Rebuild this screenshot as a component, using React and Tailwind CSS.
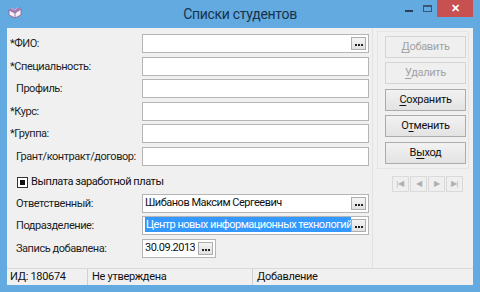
import React from 'react';

const font = { fontFamily: 'Roboto, "Noto Sans", sans-serif' };

function Mn({ pre = '', u, post = '' }) {
  return (
    <span>
      {pre}
      <span className="underline underline-offset-2">{u}</span>
      {post}
    </span>
  );
}

function DotsButton() {
  return (
    <div className="shrink-0 w-[15px] h-[13px] mr-[2px] border border-[#adadad] bg-gradient-to-b from-[#f4f4f4] to-[#e1e1e1] flex items-center justify-center gap-[1px] pt-[2px]">
      <div className="w-[2px] h-[2px] bg-[#222]" />
      <div className="w-[2px] h-[2px] bg-[#222]" />
      <div className="w-[2px] h-[2px] bg-[#222]" />
    </div>
  );
}

function Field({ label, indent, mt, dots, children, w = 'w-[227px]', selected }) {
  return (
    <div className={`flex items-center h-[19px] ${mt}`}>
      <div className={`w-[135px] pt-[1px] ${indent ? 'pl-[9px]' : 'pl-[3px]'} text-[11px] tracking-[-0.45px] text-[#1e1e1e] whitespace-nowrap`}>
        {label}
      </div>
      <div
        className={`${w} h-[19px] bg-white border border-[#b5b5b5] flex items-center justify-between`}
      >
        <div className="pl-[2px] text-[11px] tracking-[-0.5px] text-[#111] whitespace-nowrap overflow-hidden">
          {selected ? (
            <span className="bg-[#3399ff] text-white px-[1px] py-[1px]">{children}</span>
          ) : (
            children
          )}
        </div>
        {dots && <DotsButton />}
      </div>
    </div>
  );
}

function Btn({ children, disabled, mt }) {
  return (
    <div
      className={`${mt} w-[81px] h-[22px] flex items-center justify-center text-[11px] tracking-[-0.3px] border ${
        disabled
          ? 'border-[#d5d5d5] bg-[#efefef] text-[#a3a3a3]'
          : 'border-[#acacac] bg-gradient-to-b from-[#f2f2f2] to-[#e3e3e3] text-[#111]'
      }`}
    >
      {children}
    </div>
  );
}

function NavBtn({ children }) {
  return (
    <div className="w-[17px] h-[16px] border border-[#dadada] bg-[#efefef] flex items-center justify-center text-[8px] text-[#b0b0b0] leading-none">
      {children}
    </div>
  );
}

function BookIcon() {
  return (
    <svg width="14" height="13" viewBox="0 0 14 13">
      <path d="M1 4 L7 7 L13 3 L13 9 L7 12 L1 9 Z" fill="#f6eef6" stroke="#8a5a8a" strokeWidth="0.8" />
      <path d="M7 7 L7 12" stroke="#8a5a8a" strokeWidth="0.8" />
      <path d="M2 3 L7 5.5 L12 1.5" fill="none" stroke="#c56aa8" strokeWidth="1.2" />
      <path d="M3 2 L7 4 L10 1" fill="none" stroke="#e0a0c8" strokeWidth="1" />
    </svg>
  );
}

export default function App() {
  return (
    <div className="w-[480px] h-[292px] bg-[#62aadf] flex flex-col overflow-hidden" style={font}>
      {/* title bar */}
      <div className="h-[28px] flex items-start relative">
        <div className="pl-[8px] pt-[6px]">
          <BookIcon />
        </div>
        <div className="absolute left-0 right-0 top-[4px] text-center text-[14px] tracking-[-0.3px] text-[#18324d]">
          Списки студентов
        </div>
        <div className="ml-auto flex items-start">
          <div className="w-[20px] h-[17px] flex items-center justify-center">
            <div className="w-[8px] h-[2px] bg-[#2a3f55] mt-[4px]" />
          </div>
          <div className="w-[16px] h-[17px] flex items-center justify-center">
            <div className="w-[9px] h-[7px] border border-[#3c5670] border-t-2" />
          </div>
          <div className="ml-[2px] mr-[7px] w-[36px] h-[17px] bg-[#c75050] flex items-center justify-center text-white text-[11px] font-bold leading-none">
            ✕
          </div>
        </div>
      </div>

      {/* client */}
      <div className="mx-[7px] flex-1 bg-[#f0f0f0] flex flex-col">
        <div className="flex flex-1">
          {/* form */}
          <div className="w-[366px] border-r border-[#e2e2e2] flex flex-col">
            <Field label="*ФИО:" mt="mt-[6px]" dots />
            <Field label="*Специальность:" mt="mt-[4px]" />
            <Field label="Профиль:" indent mt="mt-[3px]" />
            <Field label="*Курс:" mt="mt-[4px]" />
            <Field label="*Группа:" mt="mt-[3px]" />
            <Field label="Грант/контракт/договор:" indent mt="mt-[4px]" />
            <div className="flex items-center h-[18px] mt-[7px] pl-[10px]">
              <div className="w-[11px] h-[11px] border border-[#333] bg-white flex items-center justify-center">
                <div className="w-[5px] h-[5px] bg-[#111]" />
              </div>
              <span className="ml-[3px] text-[11px] tracking-[-0.45px] text-[#111]">Выплата заработной платы</span>
            </div>
            <Field label="Ответственный:" indent mt="mt-[3px]" dots>
              Шибанов Максим Сергеевич
            </Field>
            <Field label="Подразделение:" indent mt="mt-[3px]" dots selected>
              Центр новых информационных технологий
            </Field>
            <Field label="Запись добавлена:" indent mt="mt-[4px]" dots w="w-[74px]">
              30.09.2013
            </Field>
          </div>
          {/* buttons */}
          <div className="flex-1 flex flex-col pl-[4px] pt-[3px]">
            <div className="w-[92px] h-[138px] border border-[#e4e4e4] flex flex-col items-start pl-[7px]">
              <Btn disabled mt="mt-[4px]"><Mn u="Д" post="обавить" /></Btn>
              <Btn disabled mt="mt-[4px]"><Mn u="У" post="далить" /></Btn>
              <Btn mt="mt-[5px]"><Mn u="С" post="охранить" /></Btn>
              <Btn mt="mt-[4px]"><Mn pre="О" u="т" post="менить" /></Btn>
              <Btn mt="mt-[5px]"><Mn pre="В" u="ы" post="ход" /></Btn>
            </div>
            <div className="flex ml-[15px] mt-[7px] gap-[1px]">
              <NavBtn>|◀</NavBtn>
              <NavBtn>◀</NavBtn>
              <NavBtn>▶</NavBtn>
              <NavBtn>▶|</NavBtn>
            </div>
          </div>
        </div>
        {/* status bar */}
        <div className="h-[17px] border-t border-[#d9d9d9] flex items-center text-[11px] tracking-[-0.3px] text-[#111]">
          <div className="w-[81px] pl-[3px] border-r border-[#d0d0d0] h-full flex items-center">ИД: 180674</div>
          <div className="w-[165px] pl-[4px] border-r border-[#d0d0d0] h-full flex items-center">Не утверждена</div>
          <div className="pl-[4px] h-full flex items-center">Добавление</div>
        </div>
      </div>
      <div className="h-[7px]" />
    </div>
  );
}
